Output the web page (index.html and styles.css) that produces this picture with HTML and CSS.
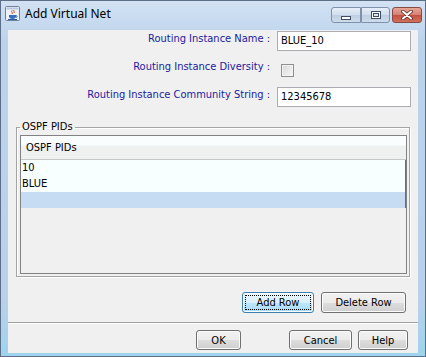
FILE: index.html
```html
<!DOCTYPE html>
<html>
<head>
<meta charset="utf-8">
<link rel="stylesheet" href="styles.css">
</head>
<body>
<div class="window">
  <div class="titlebar">
    <svg class="app-icon" width="16" height="16" viewBox="0 0 16 16">
      <rect x="0.5" y="0.5" width="14" height="14" rx="1" fill="#eef2f8" stroke="#6f819c"/>
      <rect x="1.5" y="1.5" width="12" height="2" fill="#b7c8e0"/>
      <path d="M7 4.5c-1.5 1.5 1.5 2 0 3.5M9 4c-1 1 1 1.5 0 3" stroke="#d2461e" stroke-width="1" fill="none"/>
      <path d="M4 9h7v1.5c0 1.5-1.5 2.5-3.5 2.5S4 12 4 10.5z" fill="#3a6fb8"/>
      <path d="M11 9.6c1.5 0 1.5 1.8 0 1.8" stroke="#3a6fb8" fill="none"/>
      <rect x="3" y="13" width="9" height="1" fill="#2c5aa0"/>
    </svg>
    <span class="title">Add Virtual Net</span>
    <div class="caption-btns">
      <div class="cbtn cbtn-min"><span class="glyph-min"></span></div>
      <div class="cbtn cbtn-max"><span class="glyph-max"></span></div>
      <div class="cbtn cbtn-close">
        <svg width="12" height="10" viewBox="0 0 12 10">
          <path d="M2 1.5l8 7M10 1.5l-8 7" stroke="#5a2a24" stroke-width="3.6" stroke-linecap="round"/>
          <path d="M2 1.5l8 7M10 1.5l-8 7" stroke="#ffffff" stroke-width="2" stroke-linecap="round"/>
        </svg>
      </div>
    </div>
  </div>
  <div class="client">
    <div class="form">
      <div class="lbl">Routing Instance Name :</div>
      <div class="field"><div class="input">BLUE_10</div></div>
      <div class="lbl">Routing Instance Diversity :</div>
      <div class="field"><span class="checkbox"></span></div>
      <div class="lbl">Routing Instance Community String :</div>
      <div class="field"><div class="input">12345678</div></div>
    </div>
    <fieldset class="group">
      <legend>OSPF PIDs</legend>
      <div class="scrollpane">
        <div class="thead">OSPF PIDs</div>
        <div class="trow">10</div>
        <div class="trow">BLUE</div>
        <div class="trow selected"></div>
      </div>
    </fieldset>
    <div class="row-actions">
      <button class="btn btn-focus btn-add"><span class="focus-ring">Add Row</span></button>
      <button class="btn btn-delete">Delete Row</button>
    </div>
    <div class="separator"></div>
    <div class="dialog-actions">
      <button class="btn btn-ok">OK</button>
      <button class="btn btn-cancel">Cancel</button>
      <button class="btn btn-help">Help</button>
    </div>
  </div>
</div>
</body>
</html>
```

FILE: styles.css
```css
* { box-sizing: border-box; }
html, body { margin: 0; padding: 0; }
body {
  width: 426px;
  height: 357px;
  overflow: hidden;
  font-family: "DejaVu Sans Condensed", "Liberation Sans", Arial, sans-serif;
  font-size: 11px;
  color: #000;
}
.window {
  width: 426px;
  height: 357px;
  border: 1px solid #5d6f86;
  background: linear-gradient(#d2e2f3, #bcd3ec 40px, #b9d1ea 300px, #9fd3ee);
  display: flex;
  flex-direction: column;
}
.titlebar {
  height: 29px;
  display: flex;
  align-items: flex-start;
  padding: 5px 3px 0 4px;
  flex: none;
}
.app-icon { flex: none; display: block; }
.title {
  margin-left: 4px;
  font-family: "Noto Sans", "Open Sans", sans-serif;
  font-size: 12px;
  line-height: 16px;
  color: #000;
}
.caption-btns {
  margin-left: auto;
  margin-top: 1px;
  display: flex;
  gap: 1px;
}
.cbtn {
  height: 16px;
  border: 1px solid #8091ab;
  background: linear-gradient(#e6eef8, #d1ddec 50%, #bfcfe3 51%, #cddbeb);
  display: flex;
  align-items: center;
  justify-content: center;
}
.cbtn-min { width: 30px; border-radius: 3px 0 0 3px; }
.cbtn-max { width: 29px; border-radius: 0 3px 3px 0; margin-left: -1px; }
.cbtn-close {
  width: 30px;
  margin-left: 1px;
  border-radius: 3px;
  border-color: #8a4a44;
  background: linear-gradient(#e6a698, #d57f6f 50%, #c4503f 51%, #d0705d);
}
.glyph-min {
  width: 10px;
  height: 4px;
  margin-top: 5px;
  background: #fff;
  border: 1px solid #3d4e66;
}
.glyph-max {
  width: 10px;
  height: 8px;
  border: 1px solid #3d4e66;
  box-shadow: inset 0 0 0 1px #fff, inset 0 0 0 2px #3d4e66;
  background: #dfe6f0;
}
.client {
  margin: 0 7px;
  height: 323px;
  flex: none;
  background: repeating-conic-gradient(#eeeeee 0 25%, #f2f2f2 0 50%) 0 0 / 2px 2px;
  display: flex;
  flex-direction: column;
}
.form {
  display: grid;
  grid-template-columns: 1fr 134px;
  grid-auto-rows: 20px;
  column-gap: 7px;
  row-gap: 8px;
  padding: 1px 7px 0 0;
}
.lbl {
  text-align: right;
  color: #1b1b9e;
  align-self: center;
  line-height: 14px;
  margin-top: -4px;
  white-space: nowrap;
}
.field { display: flex; align-items: center; }
.input {
  width: 134px;
  height: 20px;
  background: #fff;
  border: 1px solid #abadb3;
  padding: 0 3px;
  line-height: 18px;
  font-size: 11px;
}
.checkbox {
  width: 13px;
  height: 13px;
  margin-left: 4px;
  margin-top: 2px;
  border: 1px solid #8f8f8f;
  box-shadow: inset 0 0 0 1px #f3f3f3;
  background: linear-gradient(135deg, #d8d8d8, #f8f8f8);
}
.group {
  margin: 13px 8px 0 8px;
  padding: 1px 2px 2px 3px;
  border: 1px solid #a4a4a4;
  box-shadow: 1px 1px 0 #ffffff, inset 1px 1px 0 #ffffff;
  min-width: 0;
}
.group legend {
  padding: 0 2px;
  line-height: 14px;
  font-size: 11px;
}
.scrollpane {
  height: 139px;
  border: 1px solid #828282;
  background: repeating-conic-gradient(#eeeeee 0 25%, #f2f2f2 0 50%) 0 0 / 2px 2px;
}
.thead {
  height: 24px;
  line-height: 23px;
  padding-left: 5px;
  border-bottom: 1px solid #c8c8c8;
  background: linear-gradient(#f9fdfd, #f9fdfd 9px, #eff1f1 10px, #eff0f0);
  font-size: 11px;
}
.trow {
  height: 16px;
  line-height: 16px;
  padding-left: 1px;
  background: #f8ffff;
  border-right: 1px solid #6e6e6e;
  font-size: 11px;
}
.trow.selected { background: #c5dcf2; }
.row-actions {
  display: flex;
  justify-content: flex-end;
  gap: 7px;
  padding-right: 12px;
  margin-top: 15px;
}
.btn {
  font-family: "DejaVu Sans Condensed", "Liberation Sans", Arial, sans-serif;
  font-size: 11px;
  color: #000;
  height: 21px;
  padding: 0;
  border: 1px solid #707070;
  border-radius: 3px;
  background: linear-gradient(#f2f2f2, #ebebeb 50%, #dddddd 51%, #cfcfcf);
  box-shadow: inset 0 0 0 1px #fbfbfb;
  display: flex;
  align-items: center;
  justify-content: center;
}
.btn-focus {
  border-color: #3c7fb1;
  background: linear-gradient(#eaf6fd, #d9f0fc 50%, #bee6fd 51%, #a7d9f5);
}
.focus-ring {
  display: flex;
  align-items: center;
  justify-content: center;
  width: calc(100% - 6px);
  height: calc(100% - 6px);
  outline: 1px dotted #000;
}
.btn-add { width: 72px; }
.btn-delete { width: 85px; }
.separator {
  margin-top: 9px;
  height: 2px;
  border-top: 1px solid #a0a0a0;
  border-bottom: 1px solid #ffffff;
}
.dialog-actions {
  display: flex;
  padding-right: 10px;
  margin-top: 6px;
}
.dialog-actions .btn { height: 20px; }
.btn-ok { width: 45px; margin-left: 188px; }
.btn-cancel { width: 63px; margin-left: 48px; }
.btn-help { width: 50px; margin-left: 6px; }
```
